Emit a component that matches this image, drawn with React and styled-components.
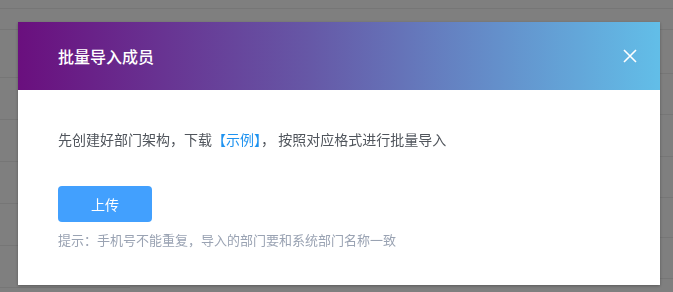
import React from 'react';
import styled, { createGlobalStyle } from 'styled-components';

const GlobalStyle = createGlobalStyle`
  html, body {
    margin: 0;
    padding: 0;
    background: #fff;
    font-family: "Noto Sans CJK SC", "Noto Sans", sans-serif;
  }
`;

const Page = styled.div`
  width: 673px;
  height: 292px;
  display: flex;
  background: #fff;
  overflow: hidden;
`;

const Column = styled.div`
  width: ${props => props.width || 'auto'};
  flex: ${props => (props.width ? 'none' : '1')};
  border-top: 1px solid #ececec;
  margin-top: 8px;
  display: flex;
  flex-direction: column;
`;

const Row = styled.div`
  height: ${props => props.height}px;
  flex: none;
  border-bottom: 1px solid #ececec;
  display: flex;
`;

const Cell = styled.div`
  width: ${props => props.width}px;
  flex: none;
  border-right: 1px solid #ececec;
`;

const Overlay = styled.div`
  position: fixed;
  inset: 0;
  background: rgba(0, 0, 0, 0.5);
  display: flex;
  align-items: flex-start;
  padding: 22px 0 0 18px;
`;

const Dialog = styled.div`
  width: 642px;
  background: #fff;
  box-shadow: 0 1px 3px rgba(0, 0, 0, 0.3);
`;

const Header = styled.div`
  height: 68px;
  display: flex;
  align-items: center;
  justify-content: space-between;
  padding: 0 23px 0 40px;
  box-sizing: border-box;
  background: linear-gradient(to right, #6a0f7e 0%, #6657a6 45%, #6490cb 75%, #62bee8 100%);
`;

const Title = styled.span`
  color: #fff;
  font-size: 16px;
  font-weight: 500;
  line-height: 24px;
`;

const CloseButton = styled.button`
  width: 14px;
  height: 14px;
  padding: 0;
  border: none;
  background: transparent;
  display: flex;
  cursor: pointer;
`;

const Body = styled.div`
  padding: 39px 40px 36px;
  display: flex;
  flex-direction: column;
  align-items: flex-start;
`;

const Text = styled.p`
  margin: 0;
  font-size: 14px;
  line-height: 20px;
  color: #50555c;
`;

const Link = styled.a`
  color: #1f93f0;
  text-decoration: none;
  cursor: pointer;
`;

const UploadButton = styled.button`
  margin-top: 37px;
  width: 94px;
  height: 36px;
  border: none;
  border-radius: 4px;
  background: #42a0fe;
  color: #fff;
  font-family: inherit;
  font-size: 14px;
  cursor: pointer;
`;

const Hint = styled.p`
  margin: 9px 0 0;
  font-size: 13px;
  line-height: 18px;
  color: #9aa3b3;
`;

const leftRows = [20, 47, 41, 41, 41, 41, 41];
const rightRows = [20, 43, 40, 41, 40, 39, 40];

const App = () => (
  <>
    <GlobalStyle />
    <Page>
      <Column width="130px">
        {leftRows.map((h, i) => (
          <Row key={i} height={h} />
        ))}
      </Column>
      <Column>
        {rightRows.map((h, i) => (
          <Row key={i} height={h}>
            {i === rightRows.length - 1 && <Cell width={20} />}
          </Row>
        ))}
      </Column>
    </Page>
    <Overlay>
      <Dialog>
        <Header>
          <Title>批量导入成员</Title>
          <CloseButton aria-label="关闭">
            <svg width="14" height="14" viewBox="0 0 14 14">
              <path d="M1 1L13 13M13 1L1 13" stroke="#fff" strokeWidth="1.6" fill="none" />
            </svg>
          </CloseButton>
        </Header>
        <Body>
          <Text>
            先创建好部门架构，下载<Link>【示例】</Link>， 按照对应格式进行批量导入
          </Text>
          <UploadButton>上传</UploadButton>
          <Hint>提示：手机号不能重复，导入的部门要和系统部门名称一致</Hint>
        </Body>
      </Dialog>
    </Overlay>
  </>
);

export default App;
